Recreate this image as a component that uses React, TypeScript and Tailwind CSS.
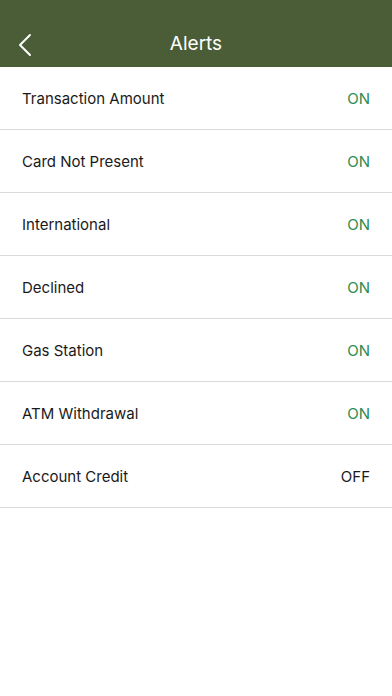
const alerts: { label: string; on: boolean }[] = [
  { label: 'Transaction Amount', on: true },
  { label: 'Card Not Present', on: true },
  { label: 'International', on: true },
  { label: 'Declined', on: true },
  { label: 'Gas Station', on: true },
  { label: 'ATM Withdrawal', on: true },
  { label: 'Account Credit', on: false },
]

export default function App() {
  return (
    <div className="min-h-[696px] w-[392px] bg-white font-['Inter','Liberation_Sans',sans-serif]">
      <header className="bg-[#4a5d37] pt-[22px]">
        <div className="relative flex h-[45px] items-center justify-center">
          <button className="absolute left-[14px] top-1/2 -translate-y-1/2 p-1">
            <svg width="14" height="24" viewBox="0 0 14 24" fill="none">
              <path d="M12 2 L2 12 L12 22" stroke="white" strokeWidth="2" strokeLinecap="round" strokeLinejoin="round" />
            </svg>
          </button>
          <h1 className="text-[19px] font-normal text-white">Alerts</h1>
        </div>
      </header>

      <ul>
        {alerts.map((a) => (
          <li
            key={a.label}
            className="flex h-[63px] items-center justify-between border-b border-[#dadada] px-[22px] pt-[3px]"
          >
            <span className="text-[15px] text-[#1a1a1a]">{a.label}</span>
            <span className={a.on ? 'text-[15px] text-[#2f8a4c]' : 'text-[15px] text-[#1a1a1a]'}>
              {a.on ? 'ON' : 'OFF'}
            </span>
          </li>
        ))}
      </ul>
    </div>
  )
}
